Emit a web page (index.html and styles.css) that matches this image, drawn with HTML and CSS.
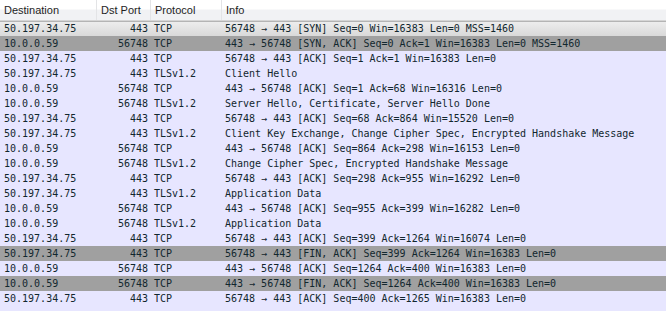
FILE: index.html
```html
<!DOCTYPE html>
<html>
<head>
    <title>Packet List</title>
    <meta charset="UTF-8">
    <link rel="stylesheet" href="styles.css">
</head>
<body>
    <div class="packet-list">
        <!-- En-tête des colonnes -->
        <div class="header">
            <div class="col dst">Destination</div>
            <div class="col port">Dst Port</div>
            <div class="col proto">Protocol</div>
            <div class="col info">Info</div>
        </div>

        <div class="row selected">
            <div class="col dst">50.197.34.75</div><div class="col port">443</div><div class="col proto">TCP</div><div class="col info">56748 → 443 [SYN] Seq=0 Win=16383 Len=0 MSS=1460</div>
        </div>
        <div class="row fin">
            <div class="col dst">10.0.0.59</div><div class="col port">56748</div><div class="col proto">TCP</div><div class="col info">443 → 56748 [SYN, ACK] Seq=0 Ack=1 Win=16383 Len=0 MSS=1460</div>
        </div>
        <div class="row tcp">
            <div class="col dst">50.197.34.75</div><div class="col port">443</div><div class="col proto">TCP</div><div class="col info">56748 → 443 [ACK] Seq=1 Ack=1 Win=16383 Len=0</div>
        </div>
        <div class="row tcp">
            <div class="col dst">50.197.34.75</div><div class="col port">443</div><div class="col proto">TLSv1.2</div><div class="col info">Client Hello</div>
        </div>
        <div class="row tcp">
            <div class="col dst">10.0.0.59</div><div class="col port">56748</div><div class="col proto">TCP</div><div class="col info">443 → 56748 [ACK] Seq=1 Ack=68 Win=16316 Len=0</div>
        </div>
        <div class="row tcp">
            <div class="col dst">10.0.0.59</div><div class="col port">56748</div><div class="col proto">TLSv1.2</div><div class="col info">Server Hello, Certificate, Server Hello Done</div>
        </div>
        <div class="row tcp">
            <div class="col dst">50.197.34.75</div><div class="col port">443</div><div class="col proto">TCP</div><div class="col info">56748 → 443 [ACK] Seq=68 Ack=864 Win=15520 Len=0</div>
        </div>
        <div class="row tcp">
            <div class="col dst">50.197.34.75</div><div class="col port">443</div><div class="col proto">TLSv1.2</div><div class="col info">Client Key Exchange, Change Cipher Spec, Encrypted Handshake Message</div>
        </div>
        <div class="row tcp">
            <div class="col dst">10.0.0.59</div><div class="col port">56748</div><div class="col proto">TCP</div><div class="col info">443 → 56748 [ACK] Seq=864 Ack=298 Win=16153 Len=0</div>
        </div>
        <div class="row tcp">
            <div class="col dst">10.0.0.59</div><div class="col port">56748</div><div class="col proto">TLSv1.2</div><div class="col info">Change Cipher Spec, Encrypted Handshake Message</div>
        </div>
        <div class="row tcp">
            <div class="col dst">50.197.34.75</div><div class="col port">443</div><div class="col proto">TCP</div><div class="col info">56748 → 443 [ACK] Seq=298 Ack=955 Win=16292 Len=0</div>
        </div>
        <div class="row tcp">
            <div class="col dst">50.197.34.75</div><div class="col port">443</div><div class="col proto">TLSv1.2</div><div class="col info">Application Data</div>
        </div>
        <div class="row tcp">
            <div class="col dst">10.0.0.59</div><div class="col port">56748</div><div class="col proto">TCP</div><div class="col info">443 → 56748 [ACK] Seq=955 Ack=399 Win=16282 Len=0</div>
        </div>
        <div class="row tcp">
            <div class="col dst">10.0.0.59</div><div class="col port">56748</div><div class="col proto">TLSv1.2</div><div class="col info">Application Data</div>
        </div>
        <div class="row tcp">
            <div class="col dst">50.197.34.75</div><div class="col port">443</div><div class="col proto">TCP</div><div class="col info">56748 → 443 [ACK] Seq=399 Ack=1264 Win=16074 Len=0</div>
        </div>
        <div class="row fin">
            <div class="col dst">50.197.34.75</div><div class="col port">443</div><div class="col proto">TCP</div><div class="col info">56748 → 443 [FIN, ACK] Seq=399 Ack=1264 Win=16383 Len=0</div>
        </div>
        <div class="row tcp">
            <div class="col dst">10.0.0.59</div><div class="col port">56748</div><div class="col proto">TCP</div><div class="col info">443 → 56748 [ACK] Seq=1264 Ack=400 Win=16383 Len=0</div>
        </div>
        <div class="row fin">
            <div class="col dst">10.0.0.59</div><div class="col port">56748</div><div class="col proto">TCP</div><div class="col info">443 → 56748 [FIN, ACK] Seq=1264 Ack=400 Win=16383 Len=0</div>
        </div>
        <div class="row tcp">
            <div class="col dst">50.197.34.75</div><div class="col port">443</div><div class="col proto">TCP</div><div class="col info">56748 → 443 [ACK] Seq=400 Ack=1265 Win=16383 Len=0</div>
        </div>
    </div>
</body>
</html>
```
FILE: styles.css
```css
body {
    margin: 0;
    background-color: #e7e6ff;
}
.packet-list {
    width: 666px;
    height: 311px;
    overflow: hidden;
    background-color: #e7e6ff;
}
.header, .row {
    display: grid;
    grid-template-columns: 97px 54px 71px 1fr;
}
.header {
    height: 20px;
    font-family: "Liberation Sans", Arial, sans-serif;
    font-size: 11px;
    color: #1e1e1e;
    background: linear-gradient(#ffffff 0, #ffffff 45%, #f1f2f4 50%, #f1f2f4 100%);
    border-bottom: 1px solid #d5d5d5;
}
.header .col {
    line-height: 20px;
    padding-left: 4px;
    border-right: 1px solid #e3e4e6;
}
.header .port {
    padding-left: 4px;
}
.header .info {
    border-right: none;
}
.row {
    height: 15px;
    font-family: "DejaVu Sans Mono", "Liberation Mono", monospace;
    font-size: 10px;
    line-height: 15px;
    color: #12272e;
    white-space: nowrap;
}
.row .col {
    overflow: hidden;
}
.row .dst {
    padding-left: 4px;
}
.row .port {
    text-align: right;
    padding-right: 3px;
}
.row .proto {
    padding-left: 3px;
}
.row .info {
    padding-left: 3px;
}
.tcp {
    background-color: #e7e6ff;
}
.fin {
    background-color: #a0a0a0;
}
.selected {
    background: linear-gradient(#eeeeee, #d9d9d9);
    box-shadow: inset 0 1px 0 #b4b4b4;
}
```
